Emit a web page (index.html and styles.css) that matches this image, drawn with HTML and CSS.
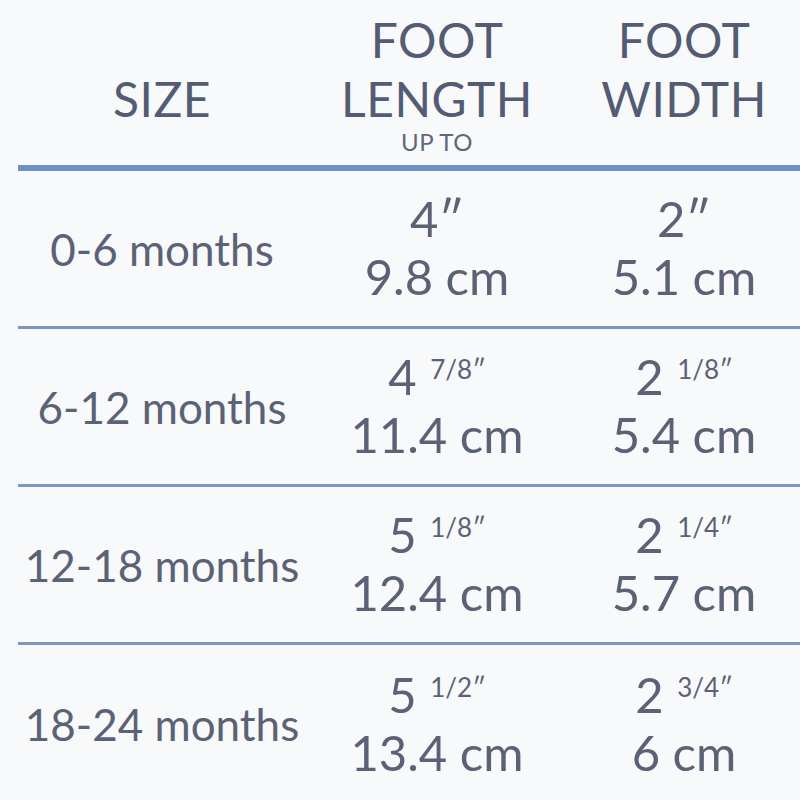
FILE: index.html
```html
<!DOCTYPE html>
<html lang="en">
<head>
<meta charset="utf-8">
<title>Size chart</title>
<link rel="stylesheet" href="styles.css">
</head>
<body>
<div class="chart">
  <div class="head">
    <div class="hcell"><div class="hline spacer"></div><div class="hline">SIZE</div></div>
    <div class="hcell"><div class="hline">FOOT</div><div class="hline">LENGTH</div><div class="upto">UP TO</div></div>
    <div class="hcell"><div class="hline">FOOT</div><div class="hline">WIDTH</div></div>
  </div>
  <div class="row">
    <div class="size">0-6 months</div>
    <div class="val"><div>4″</div><div>9.8 cm</div></div>
    <div class="val"><div>2″</div><div>5.1 cm</div></div>
  </div>
  <div class="row">
    <div class="size">6-12 months</div>
    <div class="val"><div>4 <span class="frac">7/8″</span></div><div>11.4 cm</div></div>
    <div class="val"><div>2 <span class="frac">1/8″</span></div><div>5.4 cm</div></div>
  </div>
  <div class="row">
    <div class="size">12-18 months</div>
    <div class="val"><div>5 <span class="frac">1/8″</span></div><div>12.4 cm</div></div>
    <div class="val"><div>2 <span class="frac">1/4″</span></div><div>5.7 cm</div></div>
  </div>
  <div class="row last">
    <div class="size">18-24 months</div>
    <div class="val"><div>5 <span class="frac">1/2″</span></div><div>13.4 cm</div></div>
    <div class="val"><div>2 <span class="frac">3/4″</span></div><div>6 cm</div></div>
  </div>
</div>
</body>
</html>
```
FILE: styles.css
```css
html, body {
  margin: 0;
  padding: 0;
  background: #f8f9fa;
  overflow: hidden;
}
body {
  font-family: Lato, "Noto Sans", sans-serif;
  color: #5b6276;
}
.chart {
  padding-left: 18px;
}
.head {
  display: grid;
  grid-template-columns: 288px 262px 232px;
  height: 171px;
  box-sizing: border-box;
  padding-top: 10px;
  border-bottom: 6px solid #6c8fc6;
  text-align: center;
  color: #535c73;
}
.hline {
  font-size: 48px;
  line-height: 59px;
  height: 59px;
  letter-spacing: 0.5px;
}
.upto {
  font-size: 24px;
  line-height: 28px;
  letter-spacing: 0.5px;
  color: #60677a;
}
.row {
  display: grid;
  grid-template-columns: 288px 262px 232px;
  height: 158px;
  box-sizing: border-box;
  border-bottom: 3px solid #7b97c9;
  align-items: center;
  text-align: center;
}
.row.last {
  border-bottom: none;
}
.size {
  font-size: 44px;
  line-height: 56px;
}
.val {
  font-size: 49px;
  line-height: 58px;
  padding-bottom: 3px;
}
.frac {
  font-size: 26px;
  line-height: 1;
  vertical-align: 16px;
  margin-left: 1px;
}
```
